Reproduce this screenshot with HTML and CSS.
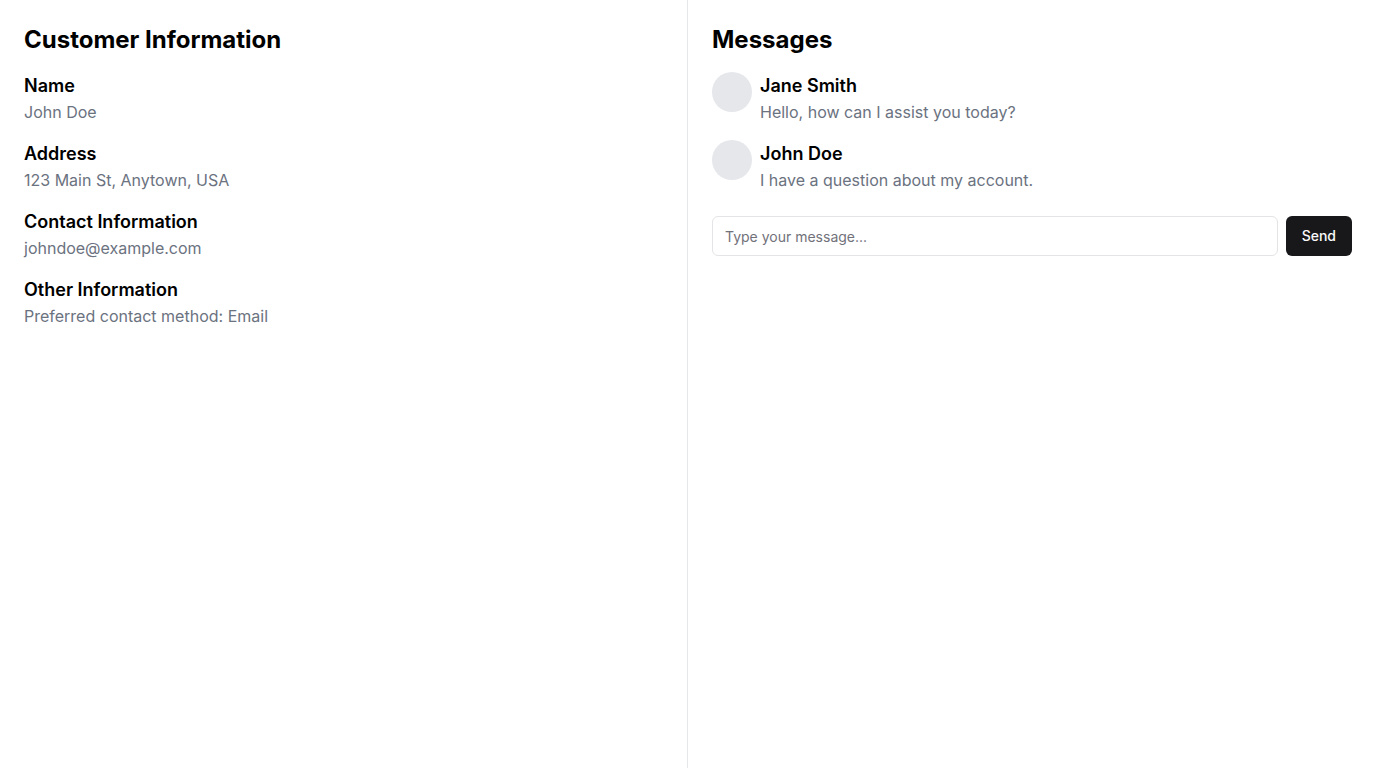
FILE: index.html
```html
<!DOCTYPE html>
<html lang="en">
<head>
<meta charset="utf-8">
<meta name="viewport" content="width=device-width, initial-scale=1">
<title>Customer Messages</title>
<link rel="stylesheet" href="styles.css">
</head>
<body>
<main class="layout">
  <section class="panel panel-customer">
    <h2 class="panel-title">Customer Information</h2>
    <div class="stack">
      <div>
        <h3 class="item-title">Name</h3>
        <p class="item-text">John Doe</p>
      </div>
      <div>
        <h3 class="item-title">Address</h3>
        <p class="item-text">123 Main St, Anytown, USA</p>
      </div>
      <div>
        <h3 class="item-title">Contact Information</h3>
        <p class="item-text">johndoe@example.com</p>
      </div>
      <div>
        <h3 class="item-title">Other Information</h3>
        <p class="item-text">Preferred contact method: Email</p>
      </div>
    </div>
  </section>
  <section class="panel">
    <h2 class="panel-title">Messages</h2>
    <div class="stack">
      <div class="message">
        <span class="avatar"></span>
        <div>
          <h3 class="item-title">Jane Smith</h3>
          <p class="item-text">Hello, how can I assist you today?</p>
        </div>
      </div>
      <div class="message">
        <span class="avatar"></span>
        <div>
          <h3 class="item-title">John Doe</h3>
          <p class="item-text">I have a question about my account.</p>
        </div>
      </div>
    </div>
    <form class="composer">
      <input class="composer-input" type="text" placeholder="Type your message..." aria-label="Message">
      <button class="composer-send" type="button">Send</button>
    </form>
  </section>
</main>
</body>
</html>
```
FILE: styles.css
```css
* {
  box-sizing: border-box;
  margin: 0;
}

body {
  background: #fff;
  color: #000;
  font-family: Inter, "Liberation Sans", sans-serif;
  font-size: 16px;
  line-height: 24px;
}

.layout {
  display: grid;
  grid-template-columns: 1fr 1fr;
  min-height: 100vh;
}

.panel {
  padding: 24px;
}

.panel-customer {
  border-right: 1px solid #e5e7eb;
}

.panel-title {
  margin-bottom: 16px;
  font-size: 24px;
  font-weight: 700;
  line-height: 32px;
}

.stack {
  display: grid;
  gap: 16px;
}

.item-title {
  font-size: 18px;
  font-weight: 600;
  line-height: 28px;
}

.item-text {
  color: #6b7280;
}

.message {
  display: flex;
  align-items: flex-start;
  gap: 8px;
}

.avatar {
  flex-shrink: 0;
  width: 40px;
  height: 40px;
  border-radius: 50%;
  background: #e5e7eb;
}

.composer {
  display: flex;
  gap: 8px;
  margin-top: 24px;
}

.composer-input,
.composer-send {
  height: 40px;
  border-radius: 6px;
  font-family: inherit;
  font-size: 14px;
  line-height: 20px;
}

.composer-input {
  flex: 1;
  min-width: 0;
  padding: 8px 12px;
  border: 1px solid #e4e4e7;
  background: #fff;
  color: #000;
}

.composer-input::placeholder {
  color: #71717a;
}

.composer-send {
  padding: 8px 16px;
  border: 0;
  background: #18181b;
  color: #fafafa;
  font-weight: 500;
}
```
